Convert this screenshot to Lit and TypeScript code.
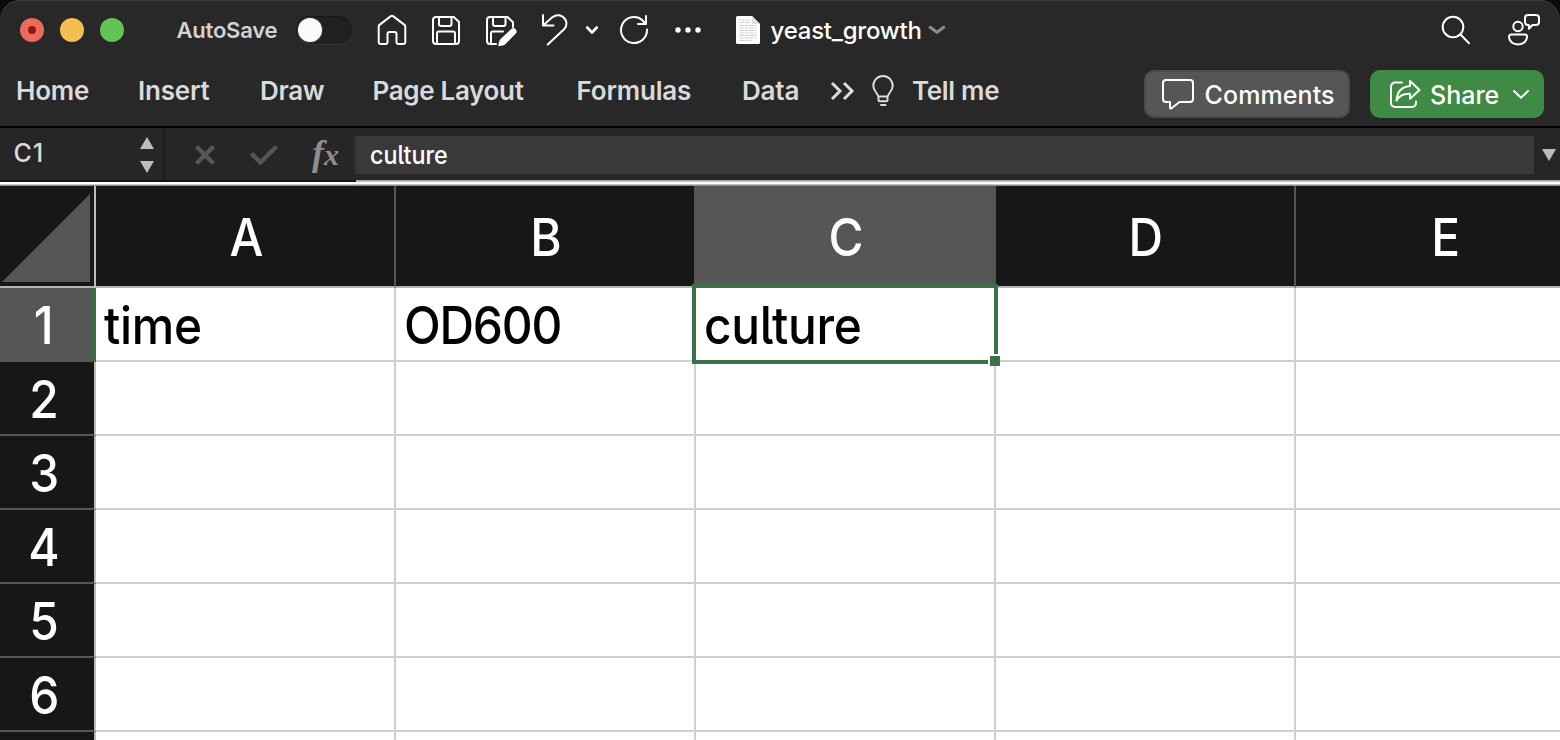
import { LitElement, html, svg, css, nothing } from "lit";
import { customElement, property } from "lit/decorators.js";
import { classMap } from "lit/directives/class-map.js";

const iconStyles = css`
  :host { display: block; }
  svg { display: block; fill: none; stroke: #fff; stroke-width: 2; stroke-linecap: round; stroke-linejoin: round; overflow: visible; }
  .solid { fill: #fff; stroke: none; }
  .fold { fill: #dedede; stroke: none; }
  .thick { stroke-width: 2.6; }
  .light { stroke: #dcdcdc; }
  .bold { stroke: #dcdcdc; stroke-width: 3; stroke-linecap: butt; stroke-linejoin: miter; }
  .dim { stroke: #8c8c8c; stroke-width: 3; }
  .off { stroke: #565656; stroke-width: 4.4; stroke-linecap: butt; stroke-linejoin: miter; }
  .tri { fill: #bcbcbc; stroke: none; }
  .print { stroke: #cfcfcf; stroke-width: 1.2; stroke-dasharray: 5 .7 3 .6; stroke-linecap: butt; }
`;

const icons: Record<string, { w: number; h: number; art: unknown }> = {
  home: { w: 32, h: 32, art: svg`<path d="M2.7 12.6a2 2 0 0 1 .8-1.7L14.5 2.4a2.2 2.2 0 0 1 2.900 0l11.1 8.500a2 2 0 0 1 .8 1.700V28a2 2 0 0 1-2 2h-5a1.800 1.800 0 0 1-1.800-1.800V20a2 2 0 0 0-2-2h-5a2 2 0 0 0-2 2v8.200a1.800 1.800 0 0 1-1.800 1.800h-5a2 2 0 0 1-2-2z"/>` },
  save: { w: 32, h: 32, art: svg`<path d="M5.500 3h18.300L29 8v19a3 3 0 0 1-3 3H6a3 3 0 0 1-3-3V6a3 3 0 0 1 2.500-3zM9 3v7a2 2 0 0 0 2 2h8.500a2 2 0 0 0 2-2V3M7 30V19.500a2 2 0 0 1 2-2h14a2 2 0 0 1 2 2V30"/>` },
  saveEdit: { w: 34, h: 34, art: svg`<path d="M12 31H6a3 3 0 0 1-3-3V7a3 3 0 0 1 3-3h17.500L29 9.300V14M9 4v7a2 2 0 0 0 2 2h8.500a2 2 0 0 0 2-2V4M7 31V20.500a2 2 0 0 1 2-2h10"/><path class="solid" d="M27 16.200a3.200 3.200 0 0 1 4.600 4.600L21.500 30.900a6 6 0 0 1-2.800 1.500l-3.300.7c-.8.2-1.300-.4-1.100-1.100l.8-3.300a6 6 0 0 1 1.500-2.700z"/>` },
  undo: { w: 30, h: 34, art: svg`<path d="M3 2v10.500h10.500M3.300 12.200l9.300-8.100c8.500-6.200 18.600 4.400 11.500 12.100L7.700 31.500"/>` },
  chevron: { w: 16, h: 10, art: svg`<path class="thick" d="M3.200 2.500 8 7.500 12.800 2.500"/>` },
  redo: { w: 32, h: 32, art: svg`<path d="M29 15.500A13 13 0 1 1 24.500 6.200M28 2v8h-8M28 10l-4-4"/>` },
  dots: { w: 28, h: 8, art: svg`<g class="solid"><circle cx="4" cy="4" r="2.700"/><circle cx="14" cy="4" r="2.700"/><circle cx="24" cy="4" r="2.700"/></g>` },
  doc: { w: 28, h: 32, art: svg`<path class="solid" d="M3.500 2H18l8 8v18.500a1.500 1.500 0 0 1-1.500 1.500h-21A1.500 1.500 0 0 1 2 28.500v-25A1.500 1.500 0 0 1 3.500 2z"/><path class="fold" d="M18 2v8h8z"/><path class="print" d="M5.500 6h11M5.500 8.500h11M5.500 11.500h17M5.500 14h17M5.500 16.500h17M5.500 19h17M5.500 21.500h17M5.500 24h17M5.500 26.500h12"/>` },
  titleChevron: { w: 18, h: 10, art: svg`<path class="dim" d="M2.200 2.300 9 7.200 15.800 2.300"/>` },
  search: { w: 32, h: 32, art: svg`<circle cx="13" cy="13" r="10.300"/><path d="M20.500 20.500 29 29.200"/>` },
  presence: { w: 36, h: 34, art: svg`<circle cx="12" cy="13.500" r="4.700"/><path d="M5.200 21.500h13.600a2.200 2.200 0 0 1 2.200 2.200c0 4.500-3.700 7.800-9 7.800s-9-3.300-9-7.800a2.200 2.200 0 0 1 2.200-2.200zM19 9V5a3 3 0 0 1 3-3h8a3 3 0 0 1 3 3v4a3 3 0 0 1-3 3h-3.500l-3.600 3.700V12H22a3 3 0 0 1-3-3z"/>` },
  more: { w: 26, h: 20, art: svg`<path class="bold" d="M2 2l8 8-8 8M14 2l8 8-8 8"/>` },
  bulb: { w: 24, h: 32, art: svg`<g class="light"><path d="M7.500 22.500c0-4-5.200-6-5.200-11.800a9.700 9.700 0 0 1 19.400 0c0 5.800-5.200 7.800-5.200 11.800v2.200a1.500 1.500 0 0 1-1.500 1.500H9a1.500 1.500 0 0 1-1.500-1.500zM7.500 21.500h9M10 30h4.500"/></g>` },
  comment: { w: 32, h: 32, art: svg`<path d="M4 2h24a3 3 0 0 1 3 3v16a3 3 0 0 1-3 3H17.500l-8 6.200c-.8.6-1.500.2-1.500-.7V24H4a3 3 0 0 1-3-3V5a3 3 0 0 1 3-3z"/>` },
  share: { w: 32, h: 30, art: svg`<path d="M12 3.500H5a4 4 0 0 0-4 4V24a4 4 0 0 0 4 4h17a4 4 0 0 0 4-4v-1.500M20 2l9.500 9-9.500 8.800v-5c-6-.4-10.500 1.700-13.500 6.700C7 13 12 7.800 20 7z"/>` },
  shareChevron: { w: 18, h: 12, art: svg`<path d="M2 3 9 9.700 16 3"/>` },
  cancel: { w: 20, h: 20, art: svg`<path class="off" d="M1.500 1.500 18.500 18.500M18.500 1.500 1.500 18.500"/>` },
  accept: { w: 28, h: 20, art: svg`<path class="off" d="M1.500 8.500 10.500 17.500 26.500 1.500"/>` },
  up: { w: 14, h: 12, art: svg`<path class="tri" d="M0 12 7 0 14 12z"/>` },
  down: { w: 14, h: 12, art: svg`<path class="tri" d="M0 0 7 12 14 0z"/>` },
};

@customElement("x-icon")
export class XIcon extends LitElement {
  static styles = iconStyles;
  @property() name = "";
  render() {
    const i = icons[this.name];
    return i ? html`<svg width=${i.w} height=${i.h} viewBox="0 0 ${i.w} ${i.h}">${i.art}</svg>` : nothing;
  }
}

@customElement("title-bar")
export class TitleBar extends LitElement {
  static styles = css`
    :host {
      display: grid; height: 60px; align-items: center; padding-left: 20px; box-sizing: border-box;
      grid-template-columns: 156.500px 119.500px 80px 54px 54px 56px 44px 34px 56px 60px 36.500px 157.500px 1fr 66px 54px;
    }
    .lights { display: flex; gap: 16px; }
    .light { width: 24px; height: 24px; border-radius: 50%; display: grid; place-items: center; }
    .close { background: #ec6a5e; }
    .close::after { content: ""; width: 8px; height: 8px; border-radius: 50%; background: #8c1a10; }
    .min { background: #f4bf4f; }
    .max { background: #61c554; }
    .auto { font-weight: 560; font-size: 22px; color: #d2d2d2; letter-spacing: -.2px; }
    .toggle { width: 56px; height: 28px; border-radius: 14px; background: #202020; box-shadow: inset 0 1px 2px #171717, 0 1px 0 #333; }
    .knob { width: 24px; height: 24px; margin: 2px; border-radius: 50%; background: #fbfbfb; box-shadow: 0 0 0 1px #3c3c3c; }
    .title { font-weight: 520; font-size: 24px; color: #fff; letter-spacing: -.22px; }
  `;
  render() {
    return html`
      <div class="lights"><i class="light close"></i><i class="light min"></i><i class="light max"></i></div>
      <span class="auto">AutoSave</span>
      <div class="toggle"><div class="knob"></div></div>
      ${["home", "save", "saveEdit", "undo", "chevron", "redo", "dots", "doc"].map((n) => html`<x-icon name=${n}></x-icon>`)}
      <span class="title">yeast_growth</span>
      <x-icon name="titleChevron"></x-icon>
      <x-icon name="search"></x-icon>
      <x-icon name="presence"></x-icon>
    `;
  }
}

@customElement("ribbon-tabs")
export class RibbonTabs extends LitElement {
  static styles = css`
    :host { display: flex; height: 66px; box-sizing: border-box; padding: 0 16px 0 16px; font-weight: 560; font-size: 26px; color: #dadada; justify-content: space-between; }
    .tabs { display: grid; height: 61px; align-items: center; white-space: nowrap; letter-spacing: -.2px; grid-template-columns: 122px 122px 112.500px 204px 165.500px 88px 41px 41px auto; }
    .tight { letter-spacing: -.32px; }
    .actions { display: flex; gap: 20px; padding-top: 10px; color: #fff; font-size: 25px; font-weight: 500; }
    .button { display: flex; align-items: center; height: 48px; box-sizing: border-box; border-radius: 10px; }
    .comments { width: 206px; background: #565656; border: 2px solid #4a4a4a; padding-left: 16px; gap: 10.500px; }
    .comments .label { letter-spacing: .1px; }
    .share { width: 174px; background: #3f8a45; padding-left: 20px; }
    .share .label { margin: 0 13px 0 8px; }
    .label { padding-top: 1px; }
  `;
  render() {
    return html`
      <div class="tabs">
        <span>Home</span><span>Insert</span><span class="tight">Draw</span><span class="tight">Page Layout</span><span>Formulas</span><span>Data</span>
        <x-icon name="more"></x-icon><x-icon name="bulb"></x-icon><span class="tight">Tell me</span>
      </div>
      <div class="actions">
        <div class="button comments"><x-icon name="comment"></x-icon><span class="label">Comments</span></div>
        <div class="button share"><x-icon name="share"></x-icon><span class="label">Share</span><x-icon name="shareChevron"></x-icon></div>
      </div>
    `;
  }
}

@customElement("formula-bar")
export class FormulaBar extends LitElement {
  static styles = css`
    :host { display: block; border-top: 2px solid #000; }
    .bar { display: flex; height: 52px; align-items: center; background: #262626; }
    .name { display: flex; align-items: center; justify-content: space-between; width: 166px; height: 52px; box-sizing: border-box; padding: 0 8px 0 13.500px; border-right: 4px solid #1f1f1f; font-size: 25px; font-weight: 450; color: #dcdcdc; }
    .ref { letter-spacing: .8px; padding-bottom: 2px; }
    .spin { display: grid; gap: 12px; padding-top: 2px; }
    .tools { display: flex; align-items: center; width: 188px; box-sizing: border-box; padding: 2px 0 0 29px; }
    .accept { margin-left: 35px; }
    .fx { margin-left: 34px; font: italic 700 36px/38px "Liberation Serif", serif; color: #8e8e8e; height: 42px; }
    .fx small { font-size: 30px; }
    .input { flex: 1; height: 38px; margin-top: 2px; box-sizing: border-box; padding: 0 0 2px 14px; background: #393939; border-left: 2px solid #303030; display: flex; align-items: center; color: #fff; font-size: 25.500px; }
    .narrow { display: inline-block; transform: scaleX(.915); transform-origin: left; font-weight: 470; font-feature-settings: "cv05"; }
    .drop { margin: 2px 4px 0 8px; }
    .strip { display: flex; height: 6px; }
    .left { width: 356px; background: linear-gradient(#151013 0 2px, #fff 2px 4px, #c9c9c9 4px 5px, #8e8e8e 5px); }
    .right { flex: 1; background: linear-gradient(#a9a9a9 0 1px, #c4c4c4 1px 2px, #fff 2px 4px, #c0c0c0 4px 5px, #8e8e8e 5px); }
  `;
  render() {
    return html`
      <div class="bar">
        <div class="name"><span class="ref">C1</span><div class="spin"><x-icon name="up"></x-icon><x-icon name="down"></x-icon></div></div>
        <div class="tools"><x-icon name="cancel"></x-icon><x-icon class="accept" name="accept"></x-icon><span class="fx">f<small>x</small></span></div>
        <div class="input"><span class="narrow">culture</span></div>
        <x-icon class="drop" name="down"></x-icon>
      </div>
      <div class="strip"><div class="left"></div><div class="right"></div></div>
    `;
  }
}

@customElement("sheet-grid")
export class SheetGrid extends LitElement {
  static styles = css`
    :host { display: block; background: #fff; font-size: 52px; line-height: 68px; }
    .row { display: grid; grid-template: 74px / 96px repeat(5, 300px); }
    .cols { grid-template-rows: 102px; line-height: 96px; }
    .corner, .col, .num, .cell { box-sizing: border-box; }
    .corner { background: #171717; border-right: 2px solid #bdbdbd; border-bottom: 2px solid #b4b4b4; padding: 8px 4px 4px 2px; }
    .triangle { width: 88px; height: 88px; background: #565656; clip-path: polygon(100% 0, 100% 100%, 0 100%); }
    .col { background: #171717; color: #fff; text-align: center; padding: 4px 0 0 2px; border-right: 2px solid #565656; border-bottom: 2px solid #b4b4b4; }
    .col.on { background: #565656; margin-left: -2px; padding-left: 5px; }
    .num { background: #171717; color: #fff; text-align: center; padding: 4px 6px 0 0; border-right: 2px solid #bdbdbd; border-bottom: 2px solid #565656; }
    .num.on { background: #565656; border-right: 4px solid #3b7048; padding-right: 4px; }
    .cell { color: #000; border-right: 2px solid #d0d0d0; border-bottom: 2px solid #d0d0d0; padding: 4px 0 0 7.500px; }
    .cell.active { position: relative; z-index: 1; }
    .text { display: inline-block; transform: scaleX(.92); font-weight: 450; font-feature-settings: "cv05"; }
    .cell .text { transform-origin: left; letter-spacing: -.3px; }
    .cell .caps { letter-spacing: -1.300px; }
    .selection { position: absolute; inset: -4px; border: 4px solid #3b7048; }
    .handle { position: absolute; right: -6px; bottom: -6px; width: 10px; height: 10px; background: #3b7048; border: solid #fff; border-width: 2px 0 0 2px; }
  `;
  private columns = ["A", "B", "C", "D", "E"];
  private values = [["time", "OD600", "culture"]];
  private cell(row: number, i: number) {
    const value = this.values[row - 1]?.[i];
    const active = row === 1 && i === 2;
    return html`<div class=${classMap({ cell: true, active })}>${value ? html`<span class=${classMap({ text: true, caps: /\d/.test(value) })}>${value}</span>` : nothing}${active ? html`<div class="selection"><div class="handle"></div></div>` : nothing}</div>`;
  }
  render() {
    return html`
      <div class="row cols">
        <div class="corner"><div class="triangle"></div></div>
        ${this.columns.map((c) => html`<div class=${classMap({ col: true, on: c === "C" })}><span class="text">${c}</span></div>`)}
      </div>
      ${[1, 2, 3, 4, 5, 6].map((n) => html`
        <div class="row">
          <div class=${classMap({ num: true, on: n === 1 })}><span class="text">${n}</span></div>
          ${this.columns.map((_, i) => this.cell(n, i))}
        </div>`)}
      <div class="row"><div class="num"></div>${this.columns.map((_, i) => this.cell(7, i))}</div>
    `;
  }
}

@customElement("app-root")
export class AppRoot extends LitElement {
  static styles = css`
    :host { display: block; width: 1560px; height: 740px; overflow: hidden; background: #0a0a0a; font-family: Inter, "Liberation Sans", sans-serif; }
    .chrome { background: #282828; border-radius: 20px 20px 0 0; box-shadow: inset 0 1px 1px #3c3c3c; }
  `;
  render() {
    return html`
      <div class="chrome"><title-bar></title-bar><ribbon-tabs></ribbon-tabs></div>
      <formula-bar></formula-bar>
      <sheet-grid></sheet-grid>
    `;
  }
}
